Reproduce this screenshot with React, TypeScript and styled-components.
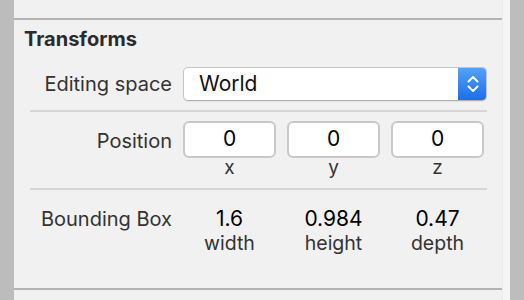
import styled, { createGlobalStyle } from "styled-components";

const GlobalStyle = createGlobalStyle`
    html, body {
        margin: 0;
        padding: 0;
        width: 524px;
        height: 300px;
        overflow: hidden;
        background: #bdbdbd;
    }
    body {
        font-family: Inter, "Liberation Sans", sans-serif;
    }
`;

const Window = styled.div`
    display: flex;
    width: 524px;
    height: 300px;
`;

const Viewport = styled.div`
    width: 14px;
    background: #bcbcbc;
    flex-shrink: 0;
`;

const Panel = styled.div`
    width: 488px;
    background: #f1f1f1;
    display: flex;
    flex-direction: column;
`;

const Scroller = styled.div`
    width: 8px;
    background: #f5f5f5;
    border-left: 1px solid #ececec;
    box-sizing: border-box;
`;

const Outside = styled.div`
    flex: 1;
    background: #bdbdbd;
`;

const TopSpace = styled.div`
    height: 18px;
    border-bottom: 2px solid #b3b3b3;
`;

const Section = styled.div`
    padding: 0 15px 0 10px;
    height: 268px;
    border-bottom: 2px solid #b3b3b3;
`;

const Title = styled.h2`
    margin: 0;
    padding-top: 7px;
    height: 40px;
    font-size: 20px;
    font-weight: 700;
    color: #2b2b2b;
    line-height: 24px;
`;

const Row = styled.div<{ $height: number }>`
    display: flex;
    align-items: flex-start;
    height: ${(p) => p.$height}px;
    margin-left: 6px;
    border-bottom: 2px solid #d6d6d6;
    box-sizing: border-box;
`;

const LastRow = styled(Row)`
    border-bottom: none;
`;

const Label = styled.div<{ $top: number }>`
    width: 153px;
    padding-right: 11px;
    padding-top: ${(p) => p.$top}px;
    text-align: right;
    font-size: 20px;
    line-height: 24px;
    color: #333;
    flex-shrink: 0;
    box-sizing: border-box;
    white-space: nowrap;
`;

const Select = styled.div`
    display: flex;
    width: 304px;
    height: 34px;
    border: 1px solid #c4c4c4;
    border-bottom-color: #b0b0b0;
    border-radius: 5px;
    background: #fff;
    box-sizing: border-box;
    overflow: hidden;
    box-shadow: 0 1px 0 rgba(0, 0, 0, 0.05);
`;

const SelectValue = styled.div`
    flex: 1;
    padding-left: 15px;
    font-size: 21px;
    line-height: 32px;
    color: #111;
`;

const SelectButton = styled.div`
    width: 29px;
    display: flex;
    align-items: center;
    justify-content: center;
    background: linear-gradient(#55a3f8, #1c6ce9);
    margin: -1px -1px -1px 0;
`;

const Fields = styled.div<{ $top: number }>`
    display: flex;
    gap: 11px;
    padding-top: ${(p) => p.$top}px;
`;

const FieldColumn = styled.div`
    display: flex;
    flex-direction: column;
    align-items: center;
    width: 93px;
`;

const Field = styled.div`
    width: 93px;
    height: 37px;
    border: 2px solid #c8c8c8;
    border-radius: 6px;
    background: #fff;
    box-sizing: border-box;
    text-align: center;
    font-size: 21px;
    line-height: 32px;
    color: #000;
`;

const Axis = styled.div`
    margin-top: 0;
    font-size: 19px;
    line-height: 20px;
    color: #333;
`;

const Value = styled.div`
    font-size: 21px;
    line-height: 24px;
    color: #000;
`;

const Dim = styled.div`
    font-size: 19.5px;
    line-height: 25px;
    color: #333;
`;

const Chevrons = () => (
    <svg width="14" height="22" viewBox="0 0 14 22">
        <path d="M2.5 8.5 L7 4 L11.5 8.5" fill="none" stroke="#fff" strokeWidth="2" strokeLinecap="round" strokeLinejoin="round" />
        <path d="M2.5 13.5 L7 18 L11.5 13.5" fill="none" stroke="#fff" strokeWidth="2" strokeLinecap="round" strokeLinejoin="round" />
    </svg>
);

const axes = ["x", "y", "z"];
const bounds = [
    { value: "1.6", name: "width" },
    { value: "0.984", name: "height" },
    { value: "0.47", name: "depth" },
];

function App() {
    return (
        <Window>
            <GlobalStyle />
            <Viewport />
            <Panel>
                <TopSpace />
                <Section>
                    <Title>Transforms</Title>
                    <Row $height={45}>
                        <Label $top={5}>Editing space</Label>
                        <Select>
                            <SelectValue>World</SelectValue>
                            <SelectButton>
                                <Chevrons />
                            </SelectButton>
                        </Select>
                    </Row>
                    <Row $height={78}>
                        <Label $top={17}>Position</Label>
                        <Fields $top={9}>
                            {axes.map((a) => (
                                <FieldColumn key={a}>
                                    <Field>0</Field>
                                    <Axis>{a}</Axis>
                                </FieldColumn>
                            ))}
                        </Fields>
                    </Row>
                    <LastRow $height={98}>
                        <Label $top={17}>Bounding Box</Label>
                        <Fields $top={17}>
                            {bounds.map((b) => (
                                <FieldColumn key={b.name}>
                                    <Value>{b.value}</Value>
                                    <Dim>{b.name}</Dim>
                                </FieldColumn>
                            ))}
                        </Fields>
                    </LastRow>
                </Section>
            </Panel>
            <Scroller />
            <Outside />
        </Window>
    );
}

export default App;
